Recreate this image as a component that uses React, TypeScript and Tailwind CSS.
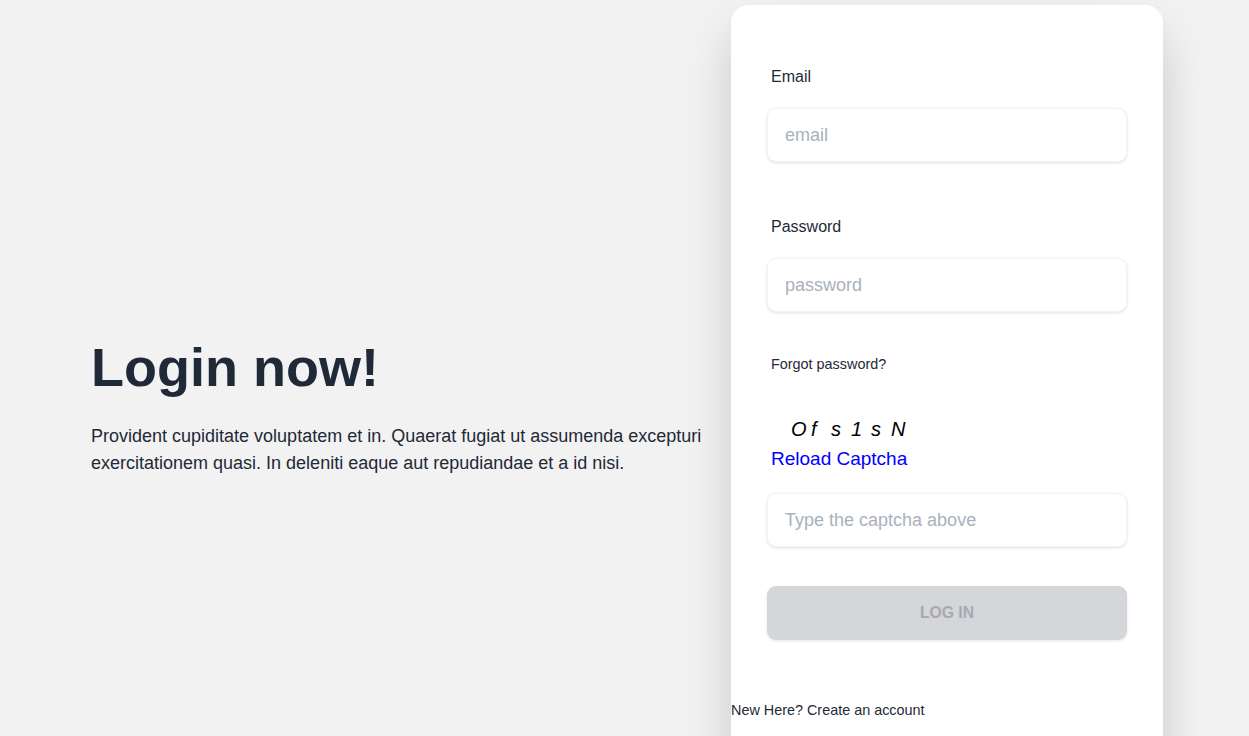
import React from "react";

const font = { fontFamily: '"Liberation Sans", Arial, sans-serif' };

function Field({ label, placeholder, type = "text" }: { label: string; placeholder: string; type?: string }) {
  return (
    <div className="flex flex-col">
      <label className="h-[22px] pl-[4px] text-[16px] leading-[22px] text-[#1f2937]">{label}</label>
      <input
        type={type}
        placeholder={placeholder}
        className="mt-[20px] h-[54px] w-full rounded-[9px] border border-[#f3f3f3] bg-white px-[17px] text-[18px] text-[#1f2937] shadow-[0_1px_3px_rgba(0,0,0,0.12)] outline-none placeholder:text-[#a9b1bd]"
      />
    </div>
  );
}

export default function App() {
  const captcha = ["O", "f", "s", "1", "s", "N"];
  return (
    <div className="min-h-screen bg-[#f2f2f2]" style={font}>
      <div className="flex items-center gap-[18px] pl-[91px] pt-[5px] pb-[5px]">
        <div className="w-[622px]">
          <h1 className="text-[54px] font-bold leading-none text-[#1f2937]">Login now!</h1>
          <p className="pt-[29px] pb-[25px] text-[18px] leading-[27px] text-[#1f2937]">
            Provident cupiditate voluptatem et in. Quaerat fugiat ut assumenda excepturi exercitationem quasi. In
            deleniti eaque aut repudiandae et a id nisi.
          </p>
        </div>

        <div className="flex h-[832px] w-[432px] shrink-0 flex-col rounded-[18px] bg-white shadow-[0_25px_50px_-6px_rgba(0,0,0,0.22)]">
          <div className="flex flex-col px-[36px] pt-[61px]">
            <Field label="Email" placeholder="email" />
            <div className="mt-[54px]">
              <Field label="Password" placeholder="password" type="password" />
            </div>
            <a className="mt-[42px] h-[20px] pl-[4px] text-[14.4px] leading-[20px] text-[#1f2937]">Forgot password?</a>

            <div className="mt-[43px] flex h-[24px] pl-[24px] text-[20px] italic leading-[24px] text-black">
              {captcha.map((c, i) => (
                <span key={i} className="w-[20px]">
                  {c}
                </span>
              ))}
            </div>
            <a className="mt-[6px] h-[24px] pl-[4px] text-[19px] leading-[24px] text-[#0000ff]">Reload Captcha</a>
            <input
              placeholder="Type the captcha above"
              className="mt-[22px] h-[54px] w-full rounded-[9px] border border-[#f3f3f3] bg-white px-[17px] text-[18px] shadow-[0_1px_3px_rgba(0,0,0,0.12)] outline-none placeholder:text-[#a9b1bd]"
            />
            <button
              disabled
              className="mt-[39px] h-[54px] w-full rounded-[9px] bg-[#d5d6da] text-[15.75px] font-bold uppercase text-[#a7a9ae] shadow-[0_1px_3px_rgba(0,0,0,0.1)]"
            >
              Log in
            </button>
          </div>
          <p className="mt-[60px] text-[14.4px] leading-[20px] text-[#1f2937]">New Here? Create an account</p>
        </div>
      </div>
    </div>
  );
}
